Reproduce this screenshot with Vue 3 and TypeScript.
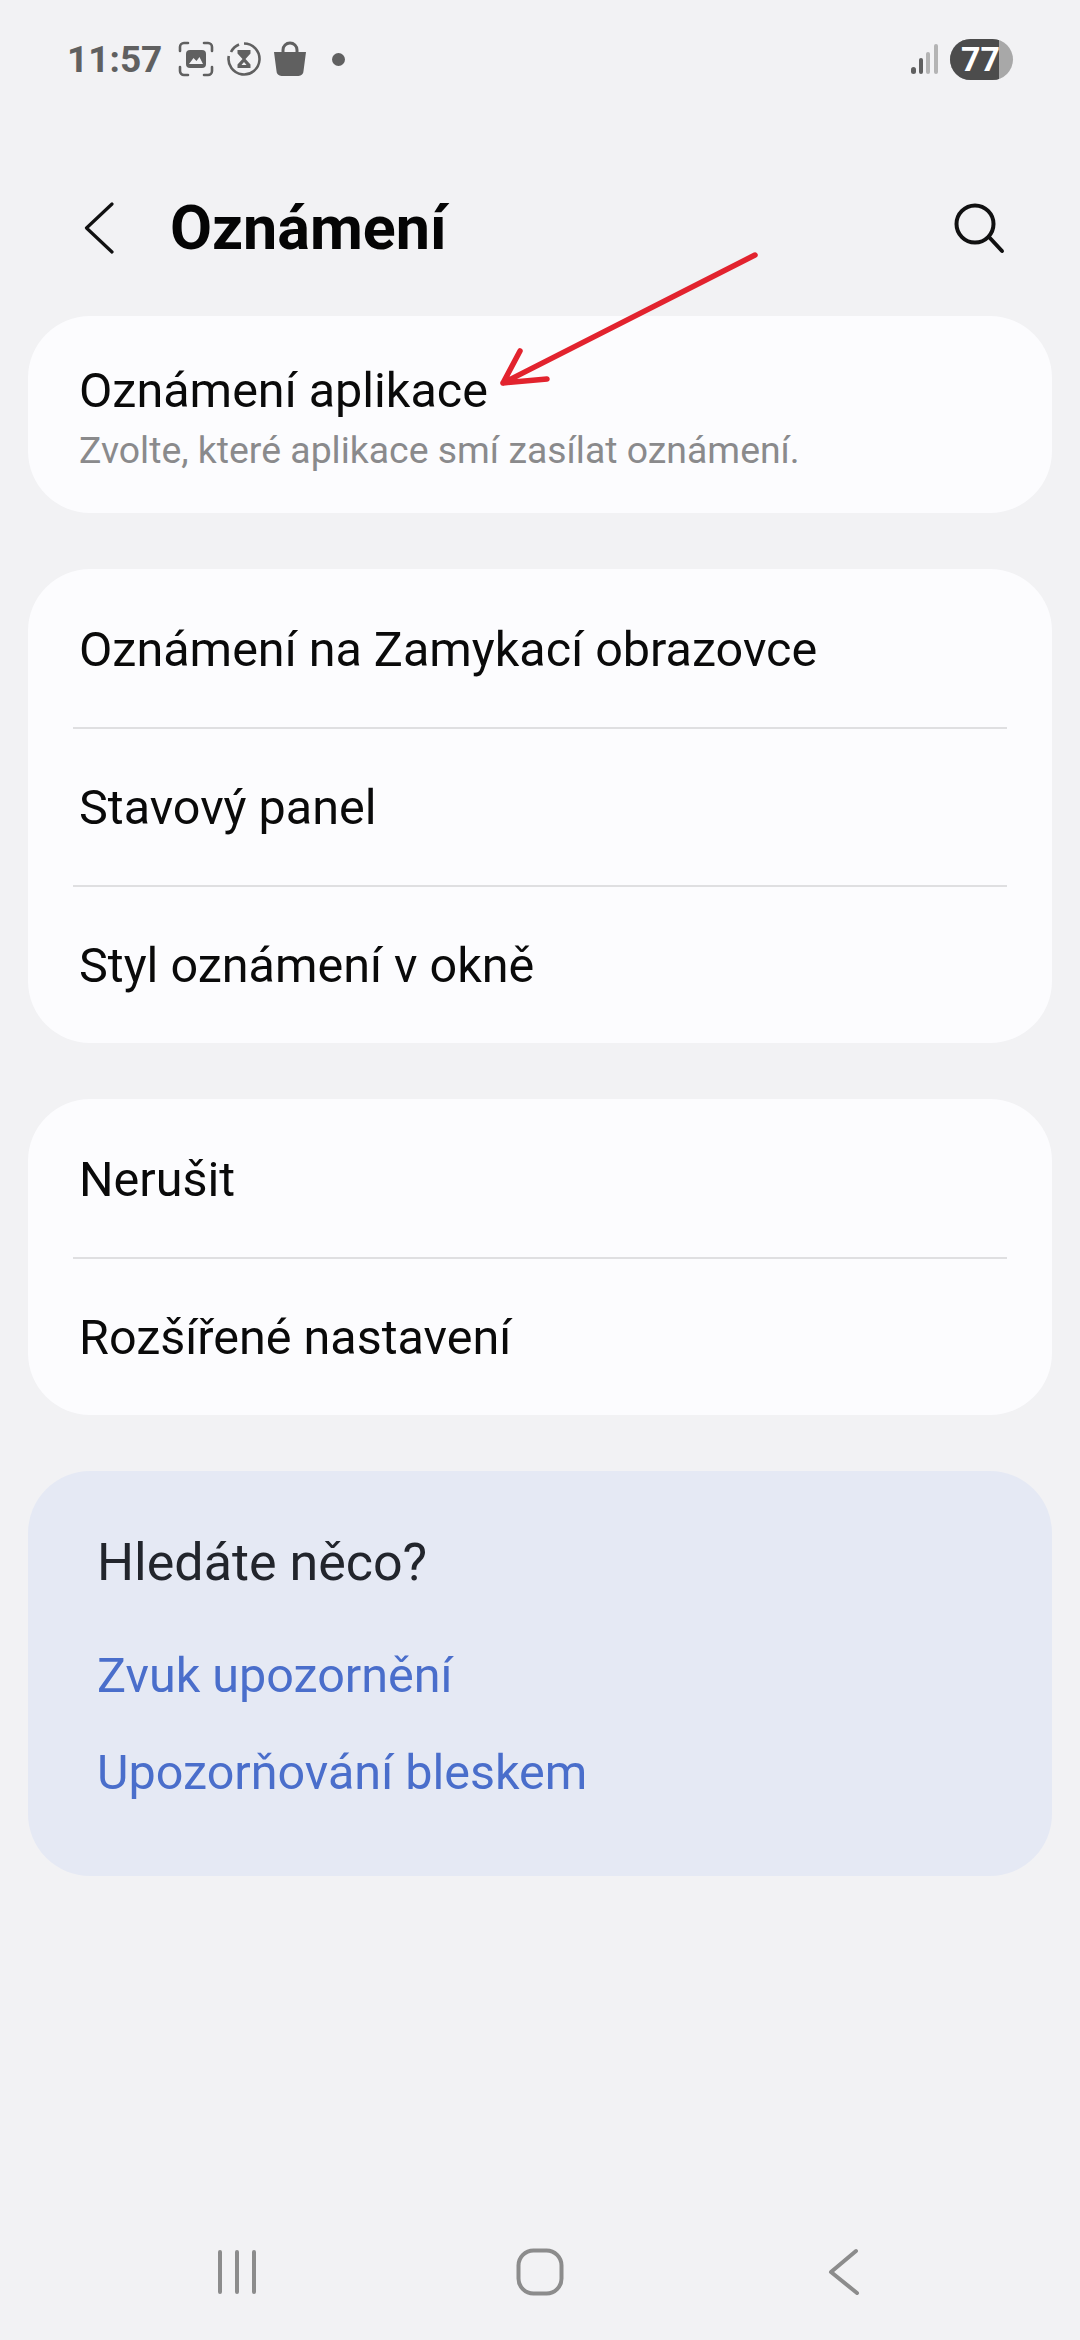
<script setup lang="ts">
const lockRows = ['Oznámení na Zamykací obrazovce', 'Stavový panel', 'Styl oznámení v okně']
const moreRows = ['Nerušit', 'Rozšířené nastavení']
const links = ['Zvuk upozornění', 'Upozorňování bleskem']
</script>

<template>
  <div class="screen">
    <div class="status">
      <span class="time">11:57</span>
      <svg class="st-icon" width="36" height="36" viewBox="0 0 36 36">
        <path d="M2 10V6a4 4 0 0 1 4-4h4M26 2h4a4 4 0 0 1 4 4v4M34 26v4a4 4 0 0 1-4 4h-4M10 34H6a4 4 0 0 1-4-4v-4" fill="none" stroke="#606060" stroke-width="2.6" stroke-linecap="round" />
        <rect x="8" y="9" width="20" height="18" rx="4" fill="#606060" />
        <path d="M11 23l4.500-6 3 3 3-4 3.500 7z" fill="#f2f2f4" />
      </svg>
      <svg class="st-icon" width="36" height="36" viewBox="0 0 36 36">
        <path d="M18 2.500a15.500 15.500 0 1 1-15.200 12.500" fill="none" stroke="#606060" stroke-width="2.600" />
        <path d="M5 11a15.500 15.500 0 0 1 8-7.500" fill="none" stroke="#606060" stroke-width="2.600" />
        <path d="M11.500 9h13v3.500L19.500 18l5 5.500V27h-13v-3.500l5-5.500-5-5.500z" fill="#606060" />
        <path d="M15.500 24h5l-2.500-3z" fill="#f2f2f4" />
      </svg>
      <svg class="st-icon bag" width="34" height="36" viewBox="0 0 34 36">
        <path d="M10 11V9a7 7 0 0 1 14 0v2" fill="none" stroke="#606060" stroke-width="3" />
        <path d="M1 11h32l-2.500 19a5 5 0 0 1-5 5h-17a5 5 0 0 1-5-5z" fill="#606060" />
      </svg>
      <span class="dot"></span>
      <svg class="signal" width="30" height="32" viewBox="0 0 30 32">
        <rect x="0" y="23" width="5" height="7" rx="2.500" fill="#606060" />
        <rect x="8" y="14" width="4" height="16" rx="2" fill="#606060" />
        <rect x="15" y="8" width="4" height="22" rx="2" fill="#b4b4b4" />
        <rect x="23" y="0" width="4" height="30" rx="2" fill="#b4b4b4" />
      </svg>
      <div class="battery">
        <span class="battery-fill"></span>
        <span class="battery-num">77</span>
      </div>
    </div>

    <header class="header">
      <svg width="30" height="54" viewBox="0 0 30 54">
        <path d="M28 3L2.500 27 28 51" fill="none" stroke="#111" stroke-width="3.200" stroke-linecap="round" stroke-linejoin="round" />
      </svg>
      <h1 class="title">Oznámení</h1>
      <svg class="search" width="52" height="52" viewBox="0 0 52 52">
        <circle cx="22" cy="22" r="18.500" fill="none" stroke="#111" stroke-width="4" />
        <path d="M36 35l13 14" fill="none" stroke="#111" stroke-width="4" stroke-linecap="round" />
      </svg>
    </header>

    <main class="content">
      <section class="card single">
        <div class="row-title">Oznámení aplikace</div>
        <div class="row-sub">Zvolte, které aplikace smí zasílat oznámení.</div>
      </section>

      <section class="card">
        <div v-for="r in lockRows" :key="r" class="row">{{ r }}</div>
      </section>

      <section class="card">
        <div v-for="r in moreRows" :key="r" class="row">{{ r }}</div>
      </section>

      <section class="suggest">
        <div class="suggest-title">Hledáte něco?</div>
        <a v-for="l in links" :key="l" class="suggest-link">{{ l }}</a>
      </section>
    </main>

    <nav class="navbar">
      <svg width="40" height="46" viewBox="0 0 40 46">
        <path d="M3 3v40M20 3v40M37 3v40" fill="none" stroke="#8c8c8c" stroke-width="4" stroke-linecap="round" />
      </svg>
      <svg class="home" width="48" height="48" viewBox="0 0 48 48">
        <rect x="2.500" y="2.500" width="43" height="43" rx="15" fill="none" stroke="#8c8c8c" stroke-width="4" />
      </svg>
      <svg width="32" height="48" viewBox="0 0 32 48">
        <path d="M28 3L3 24l26 21" fill="none" stroke="#8c8c8c" stroke-width="4" stroke-linecap="round" stroke-linejoin="round" />
      </svg>
    </nav>

    <!-- hand drawn annotation on top of the screenshot -->
    <svg class="annotation" width="1080" height="500" viewBox="0 0 1080 500">
      <path d="M755 255L503 383M520 351L503 383M503 383L547 379" fill="none" stroke="#e2232e" stroke-width="5.500" stroke-linecap="round" stroke-linejoin="round" />
    </svg>
  </div>
</template>

<style scoped>
.screen {
  position: relative;
  display: flex;
  flex-direction: column;
  height: 2340px;
  background: #f2f2f4;
  font-family: Roboto, "Noto Sans", sans-serif;
  color: #0a0a0a;
  overflow: hidden;
}

.status {
  display: flex;
  align-items: center;
  height: 118px;
  padding: 0 67px;
  box-sizing: border-box;
}

.time {
  width: 111px;
  font-size: 37px;
  font-weight: 700;
  color: #606060;
}

.st-icon {
  margin-right: 12px;
}

.bag {
  margin-left: -1px;
  margin-right: 25px;
}

.dot {
  width: 13px;
  height: 13px;
  border-radius: 50%;
  background: #606060;
}

.signal {
  margin-left: auto;
  margin-right: 9px;
  margin-top: 2px;
}

.battery {
  position: relative;
  width: 63px;
  height: 41px;
  border-radius: 21px;
  background: #a8a8a8;
  overflow: hidden;
}

.battery-fill {
  display: block;
  width: 49px;
  height: 100%;
  background: #4c4c4c;
}

.battery-num {
  position: absolute;
  left: 11px;
  top: 0;
  line-height: 41px;
  font-size: 34px;
  font-weight: 700;
  color: #fff;
}

.header {
  display: flex;
  align-items: center;
  height: 198px;
  padding: 22px 75px 0 84px;
  box-sizing: border-box;
}

.title {
  margin: 0 0 0 56px;
  font-size: 61px;
  font-weight: 700;
  color: #050505;
}

.search {
  margin-left: auto;
}

.content {
  display: flex;
  flex-direction: column;
  gap: 56px;
  padding: 0 28px;
}

.card {
  background: #fcfcfe;
  border-radius: 62px;
}

.single {
  height: 197px;
  padding: 48px 51px 0;
  box-sizing: border-box;
}

.row-title {
  font-size: 48.500px;
  line-height: 54px;
}

.row-sub {
  margin-top: 11px;
  font-size: 37.400px;
  line-height: 42px;
  color: #8a8a8c;
}

.row {
  position: relative;
  height: 158px;
  padding-left: 51px;
  font-size: 48.500px;
  line-height: 162px;
}

.row + .row::before {
  content: "";
  position: absolute;
  left: 45px;
  right: 45px;
  top: 0;
  height: 2px;
  background: #dfdfe1;
}

.suggest {
  display: flex;
  flex-direction: column;
  height: 405px;
  padding: 51px 69px 0;
  box-sizing: border-box;
  background: #e5e9f4;
  border-radius: 62px;
}

.suggest-title {
  font-size: 52px;
  line-height: 82px;
  color: #22252c;
}

.suggest-link {
  margin-top: 15px;
  font-size: 48.500px;
  line-height: 82px;
  color: #4a6ecb;
}

.suggest-title + .suggest-link {
  margin-top: 31px;
}

.navbar {
  margin-top: auto;
  display: flex;
  align-items: center;
  justify-content: space-between;
  height: 92px;
  margin-bottom: 22px;
  padding: 0 220px 0 217px;
  box-sizing: border-box;
}

.home {
  margin-right: 6px;
}

.annotation {
  position: absolute;
  left: 0;
  top: 0;
  pointer-events: none;
}
</style>
